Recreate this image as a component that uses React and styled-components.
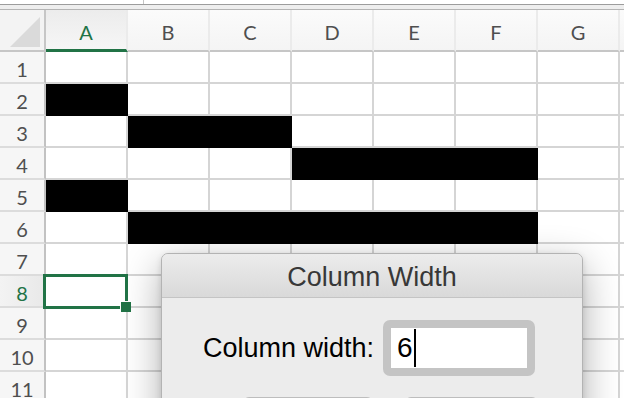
import React from 'react';
import styled, { createGlobalStyle } from 'styled-components';

const Global = createGlobalStyle`
  html, body { margin: 0; padding: 0; width: 624px; height: 398px; overflow: hidden; background: #fff; }
  #root { width: 624px; height: 398px; }
`;

const Page = styled.div`
  position: relative;
  width: 624px;
  height: 398px;
  overflow: hidden;
  background: #fff;
  font-family: Lato, "Open Sans", sans-serif;
`;

const TopStrip = styled.div`
  display: flex;
  flex-direction: column;
  height: 10px;
`;
const FormulaEdge = styled.div`
  display: flex;
  height: 4px;
  background: #fff;
`;
const NameBox = styled.div`
  width: 143px;
  border-right: 1px solid #c4c4c4;
`;
const StripLine = styled.div`
  height: 1px;
  background: ${p => p.$dark ? '#9c9c9c' : '#b4b4b4'};
`;
const StripFill = styled.div`
  height: 4px;
  background: #eeeeee;
`;

const Sheet = styled.div`
  display: flex;
  flex-direction: column;
`;

const HeaderRow = styled.div`
  display: flex;
  height: 42px;
  background: linear-gradient(#fbfbfb, #f4f4f4);
`;

const Corner = styled.div`
  flex: none;
  width: 46px;
  box-sizing: border-box;
  border-right: 2px solid #c6c6c6;
  border-bottom: 2px solid #c6c6c6;
  background: #f3f3f3;
  display: flex;
  align-items: flex-end;
  justify-content: flex-end;
  padding: 0 4px 3px 0;
`;

const ColHead = styled.div`
  flex: none;
  width: 82px;
  box-sizing: border-box;
  border-right: 2px solid #ebebeb;
  border-bottom: ${p => p.$sel ? '3px solid #217346' : '2px solid #c6c6c6'};
  background: ${p => p.$sel ? 'linear-gradient(#ececec, #f6f6f6)' : 'transparent'};
  display: flex;
  align-items: center;
  justify-content: center;
  padding-top: 4px;
  font-size: 20px;
  color: ${p => p.$sel ? '#217346' : '#4f4f4f'};
`;

const Row = styled.div`
  display: flex;
  height: 32px;
`;

const RowHead = styled.div`
  flex: none;
  width: 46px;
  box-sizing: border-box;
  border-right: 2px solid #c2c2c2;
  border-bottom: 2px solid #dcdcdc;
  background: ${p => p.$sel ? 'linear-gradient(90deg, #f3f3f3, #e9e9e9)' : '#f6f6f6'};
  display: flex;
  align-items: center;
  justify-content: center;
  padding-top: 3px;
  font-size: 20px;
  color: ${p => p.$sel ? '#217346' : '#4f4f4f'};
`;

const Cell = styled.div`
  position: relative;
  flex: none;
  width: 82px;
  box-sizing: border-box;
  border-right: 2px solid ${p => p.$fill ? '#000' : '#d5d5d5'};
  border-bottom: 2px solid ${p => p.$fill ? '#000' : '#d5d5d5'};
  background: ${p => p.$fill ? '#000' : '#fff'};
`;

const Selection = styled.div`
  position: absolute;
  z-index: 2;
  top: -2px;
  left: -3px;
  right: -2px;
  bottom: -3px;
  border: 3px solid #217346;
  pointer-events: none;
`;

const FillHandle = styled.div`
  position: absolute;
  right: -6px;
  bottom: -6px;
  width: 10px;
  height: 10px;
  background: #217346;
  border-left: 1px solid #fff;
  border-top: 1px solid #fff;
`;

const Dialog = styled.div`
  position: absolute;
  z-index: 5;
  left: 161px;
  top: 253px;
  width: 422px;
  height: 200px;
  box-sizing: border-box;
  border: 1px solid #b3b3b3;
  border-radius: 7px 7px 0 0;
  background: #ececec;
  box-shadow: 0 12px 38px rgba(0, 0, 0, 0.32), 0 2px 6px rgba(0, 0, 0, 0.12);
  overflow: hidden;
  font-family: "Liberation Sans", Arial, sans-serif;
`;

const TitleBar = styled.div`
  height: 44px;
  box-sizing: border-box;
  border-bottom: 1px solid #c4c4c4;
  background: linear-gradient(#ececec, #d9d9d9);
  display: flex;
  align-items: center;
  justify-content: center;
  padding-top: 4px;
  font-size: 27px;
  color: #383838;
`;

const Body = styled.div`
  display: flex;
  flex-direction: column;
  padding: 22px 0 0 41px;
`;

const FieldRow = styled.div`
  display: flex;
  align-items: center;
  gap: 9px;
`;

const Label = styled.div`
  font-size: 27px;
  color: #000;
`;

const Ring = styled.div`
  width: 152px;
  height: 56px;
  box-sizing: border-box;
  padding: 8px;
  border-radius: 7px;
  background: #c4c4c4;
`;

const Input = styled.div`
  height: 40px;
  background: #fff;
  display: flex;
  align-items: center;
  padding-left: 6px;
  font-size: 28px;
  color: #000;
`;

const Caret = styled.span`
  display: inline-block;
  width: 2px;
  height: 38px;
  margin-left: 1px;
  background: #000;
`;

const ButtonRow = styled.div`
  display: flex;
  gap: 32px;
  margin: 21px 0 0 40px;
`;

const Button = styled.div`
  width: ${p => p.$w}px;
  height: 36px;
  box-sizing: border-box;
  border: 1px solid #bdbdbd;
  border-radius: 6px;
  background: #fafafa;
`;

const cols = ['A', 'B', 'C', 'D', 'E', 'F', 'G', 'H'];
const labelled = ['A', 'B', 'C', 'D', 'E', 'F', 'G'];
const filled = {
  2: ['A'],
  3: ['B', 'C'],
  4: ['D', 'E', 'F'],
  5: ['A'],
  6: ['B', 'C', 'D', 'E', 'F'],
};

export default function App() {
  return (
    <Page>
      <Global />
      <TopStrip>
        <FormulaEdge><NameBox /></FormulaEdge>
        <StripLine $dark />
        <StripFill />
        <StripLine />
      </TopStrip>
      <Sheet>
        <HeaderRow>
          <Corner>
            <svg width="30" height="30" viewBox="0 0 30 30">
              <polygon points="30,0 30,30 0,30" fill="#dadada" />
            </svg>
          </Corner>
          {cols.map(c => (
            <ColHead key={c} $sel={c === 'A'}>{labelled.includes(c) ? c : ''}</ColHead>
          ))}
        </HeaderRow>
        {Array.from({ length: 11 }, (_, i) => i + 1).map(r => (
          <Row key={r}>
            <RowHead $sel={r === 8}>{r}</RowHead>
            {cols.map(c => (
              <Cell key={c} $fill={(filled[r] || []).includes(c)}>
                {r === 8 && c === 'A' && (
                  <Selection>
                    <FillHandle />
                  </Selection>
                )}
              </Cell>
            ))}
          </Row>
        ))}
      </Sheet>
      <Dialog>
        <TitleBar>Column Width</TitleBar>
        <Body>
          <FieldRow>
            <Label>Column width:</Label>
            <Ring>
              <Input>6<Caret /></Input>
            </Ring>
          </FieldRow>
          <ButtonRow>
            <Button $w={130} />
            <Button $w={133} />
          </ButtonRow>
        </Body>
      </Dialog>
    </Page>
  );
}
